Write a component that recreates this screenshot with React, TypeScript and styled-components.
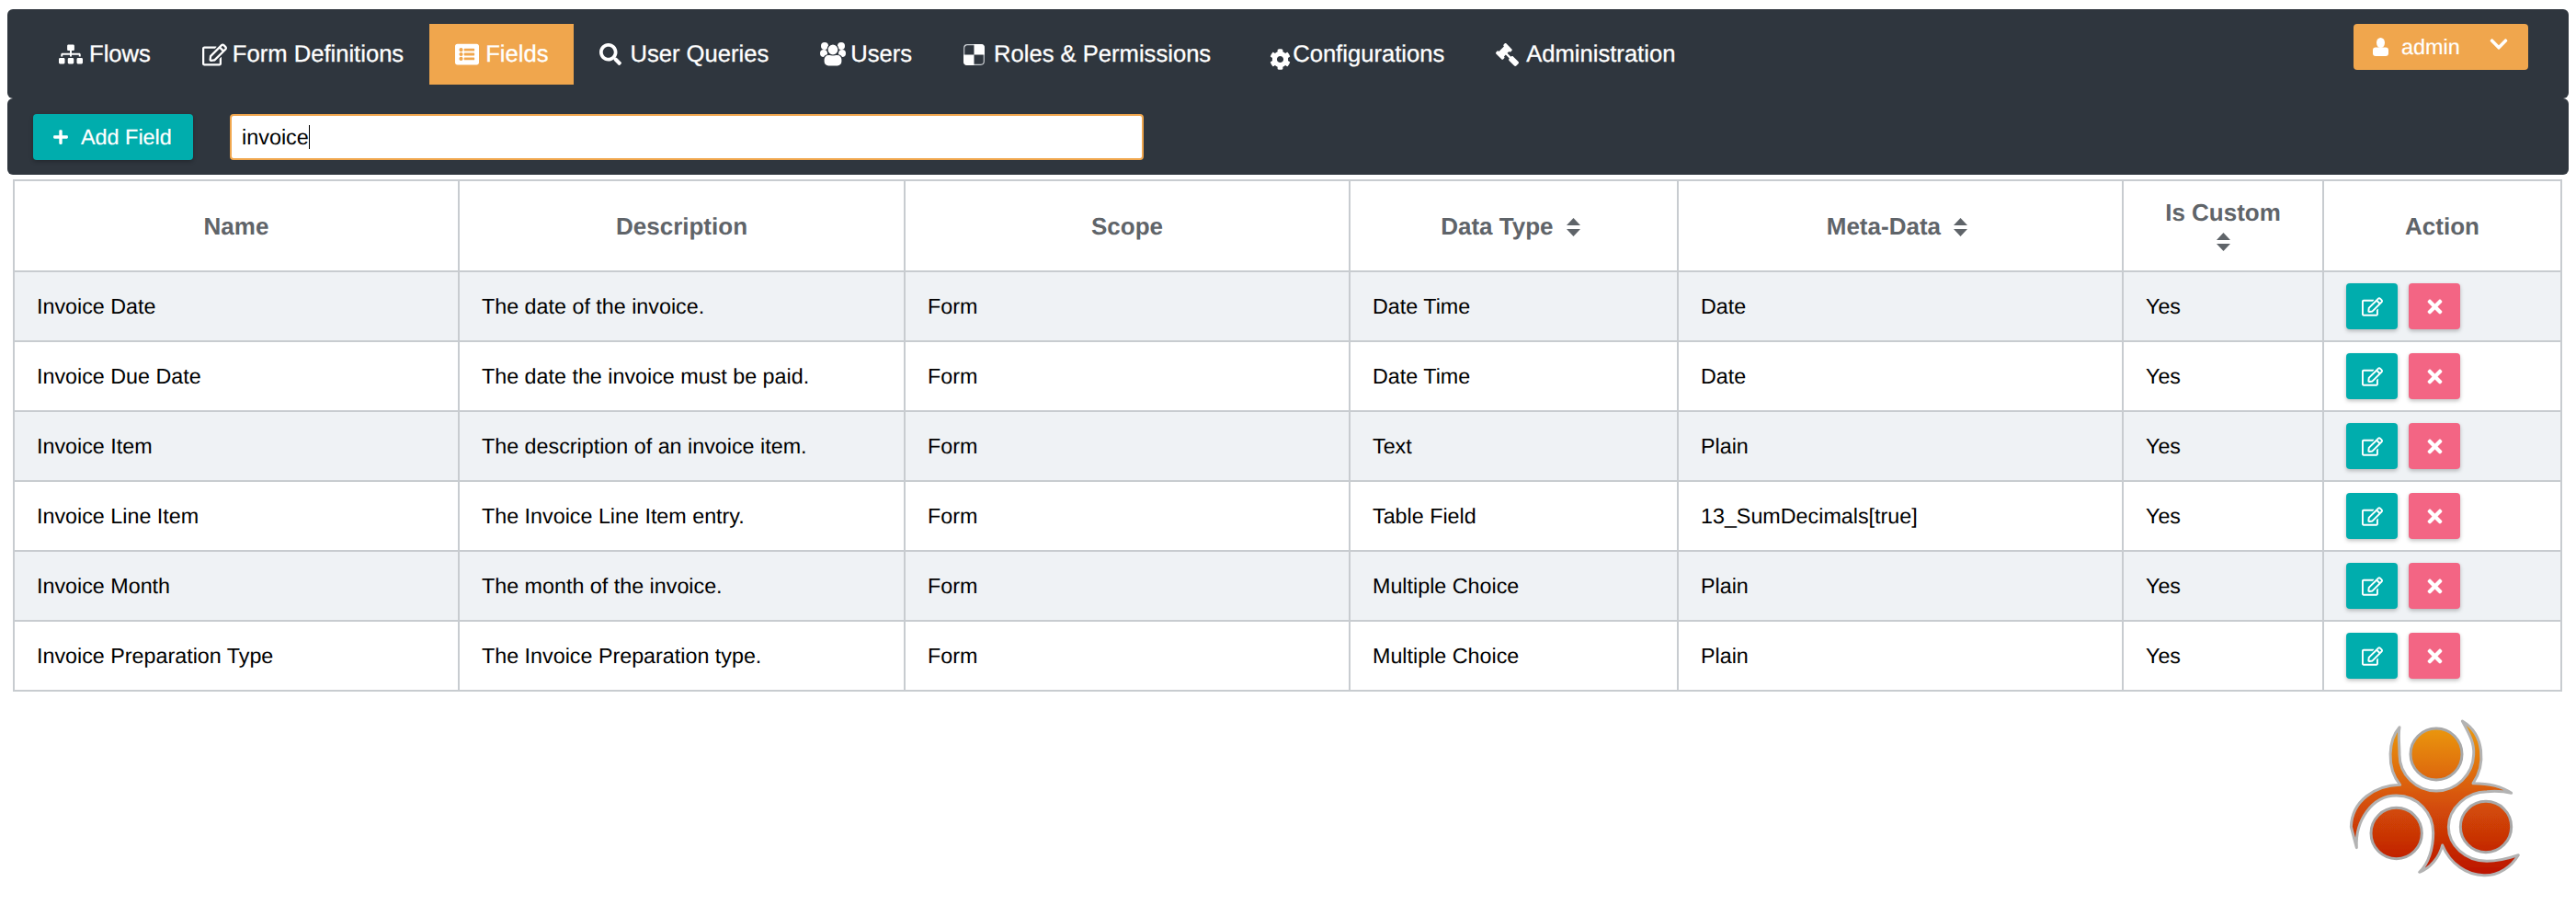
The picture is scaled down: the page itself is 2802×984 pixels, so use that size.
import React from "react";
import styled, { createGlobalStyle } from "styled-components";
import {
  FaSitemap,
  FaRegEdit,
  FaListAlt,
  FaSearch,
  FaCog,
  FaGavel,
  FaChevronDown,
  FaPlus,
  FaTimes,
} from "react-icons/fa";

const GlobalStyle = createGlobalStyle`
  html, body {
    margin: 0;
    padding: 0;
    background: #ffffff;
    font-family: "Liberation Sans", Arial, sans-serif;
    text-rendering: geometricPrecision;
  }
`;

const Page = styled.div`
  width: 2802px;
  height: 984px;
  padding-top: 10px;
  box-sizing: border-box;
  overflow: hidden;
`;

const TopBar = styled.div`
  margin: 0 8px;
  height: 97px;
  padding: 16px 44px 0 28px;
  box-sizing: border-box;
  background: #2f363e;
  border-radius: 6px;
  display: flex;
  justify-content: space-between;
  align-items: flex-start;
`;

const NavTabs = styled.nav`
  display: flex;
  height: 66px;
`;

const NavItem = styled.a<{ $active?: boolean }>`
  display: flex;
  align-items: center;
  padding: 0 28px;
  font-size: 25.6px;
  color: #ffffff;
  white-space: nowrap;
  -webkit-text-stroke: 0.3px #ffffff;
  background: ${(p) => (p.$active ? "#f0a64d" : "transparent")};
`;

const NavIcon = styled.span<{ $gear?: boolean }>`
  display: inline-flex;
  align-items: center;
  width: ${(p) => (p.$gear ? "25px" : "33px")};
  margin-left: ${(p) => (p.$gear ? "8px" : "0")};
  transform: translateY(${(p) => (p.$gear ? "5px" : "0")});
`;

const Gavel = styled(FaGavel)`
  transform: scaleX(-1);
`;

const UserButton = styled.button`
  width: 190px;
  height: 50px;
  padding: 0 21px;
  box-sizing: border-box;
  display: flex;
  align-items: center;
  border: none;
  border-radius: 4px;
  background: #f0a64d;
  color: #ffffff;
  font-family: inherit;
  font-size: 23.4px;
  -webkit-text-stroke: 0.2px #ffffff;
  text-rendering: geometricPrecision;
`;

const UserName = styled.span`
  margin-left: 14px;
`;

const Chevron = styled.span`
  margin-left: auto;
  display: inline-flex;
  transform: translateY(-3px);
  stroke: #ffffff;
  stroke-width: 30px;
`;

const ToolBar = styled.div`
  margin: 0 8px;
  height: 83px;
  padding: 17px 28px 0;
  box-sizing: border-box;
  background: #2f363e;
  border-radius: 6px;
  display: flex;
  align-items: flex-start;
  gap: 40px;
`;

const AddButton = styled.button`
  width: 174px;
  height: 50px;
  padding: 0 0 0 21px;
  box-sizing: border-box;
  display: flex;
  align-items: center;
  gap: 13px;
  border: none;
  border-radius: 4px;
  background: #00adad;
  box-shadow: 0 2px 4px rgba(0, 0, 0, 0.25);
  color: #ffffff;
  font-family: inherit;
  font-size: 23.4px;
  -webkit-text-stroke: 0.2px #ffffff;
  text-rendering: geometricPrecision;
`;

const SearchField = styled.div`
  width: 994px;
  height: 50px;
  padding-left: 11px;
  box-sizing: border-box;
  display: flex;
  align-items: center;
  background: #ffffff;
  border: 2px solid #f0a64d;
  border-radius: 4px;
  color: #000000;
  font-size: 23.4px;
`;

const Caret = styled.span`
  width: 1.5px;
  height: 26px;
  background: #000000;
`;

const Table = styled.table`
  width: 2771px;
  margin: 5px 0 0 14px;
  border-collapse: collapse;
  table-layout: fixed;
  font-size: 23.3px;
  color: #000000;
`;

const HeadCell = styled.th`
  height: 99px;
  padding: 2px 10px 0;
  box-sizing: border-box;
  border: 2px solid #c8ccd0;
  font-size: 26px;
  line-height: 29px;
  font-weight: bold;
  color: #5f6469;
  text-align: center;
`;

const Row = styled.tr`
  &:nth-child(odd) {
    background: #eff2f5;
  }
`;

const Cell = styled.td`
  height: 76px;
  padding: 1px 0 0 24px;
  box-sizing: border-box;
  border: 2px solid #c8ccd0;
`;

const ActionCell = styled(Cell)`
  font-size: 0;
  padding-top: 0;
`;

const Actions = styled.div`
  display: flex;
  gap: 12px;
`;

const ActionButton = styled.button<{ $kind: "edit" | "remove" }>`
  width: 56px;
  height: 50px;
  padding: 0;
  display: flex;
  align-items: center;
  justify-content: center;
  border: none;
  border-radius: 4px;
  color: #ffffff;
  background: ${(p) => (p.$kind === "edit" ? "#00adad" : "#f36584")};
  box-shadow: 0 2px 4px rgba(0, 0, 0, 0.25);
`;

const SortMark = styled.svg<{ $below?: boolean }>`
  width: 15px;
  height: 20px;
  vertical-align: -2px;
  display: ${(p) => (p.$below ? "block" : "inline-block")};
  margin: ${(p) => (p.$below ? "7px auto 4px" : "0 7px")};
`;

const LogoRow = styled.div`
  display: flex;
  justify-content: flex-end;
  margin-top: 7px;
`;

const SortIcon = ({ below }: { below?: boolean }) => (
  <SortMark $below={below} viewBox="0 0 15 20">
    <path d="M7.5 0 L15 8 H0 Z M0 12 H15 L7.5 20 Z" fill="#5f6469" />
  </SortMark>
);

const UsersIcon = () => (
  <svg width="28" height="26" viewBox="0 0 28 26">
    <circle cx="5" cy="4" r="4" fill="#fff" />
    <circle cx="23" cy="4" r="4" fill="#fff" />
    <ellipse cx="4" cy="12" rx="4" ry="4" fill="#fff" />
    <ellipse cx="24" cy="12" rx="4" ry="4" fill="#fff" />
    <rect x="4" y="13.5" width="20" height="12.5" rx="5" fill="#fff" stroke="#2f363e" strokeWidth="1.2" />
    <circle cx="14" cy="8" r="6" fill="#fff" stroke="#2f363e" strokeWidth="1.2" />
  </svg>
);

const RolesIcon = () => (
  <svg width="23" height="23" viewBox="0 0 23 23">
    <rect x="0.7" y="0.7" width="21.6" height="21.6" rx="3.5" fill="none" stroke="#c9cdd1" strokeWidth="1.2" />
    <path d="M11.5 0 H19 Q23 0 23 4 V11.5 H11.5 Z M0 11.5 H11.5 V23 H4 Q0 23 0 19 Z" fill="#fff" />
  </svg>
);

const UserIcon = () => (
  <svg width="17" height="20" viewBox="0 0 17 20">
    <ellipse cx="8.5" cy="5.5" rx="4.5" ry="5.5" fill="#fff" />
    <rect x="0" y="10.5" width="17" height="9.5" rx="3" fill="#fff" />
  </svg>
);

const Logo = () => (
  <svg width="302" height="224" viewBox="0 0 906 672">
    <defs>
      <linearGradient id="logoBody" gradientUnits="userSpaceOnUse" x1="0" y1="80" x2="0" y2="580">
        <stop offset="0" stopColor="#ec9c10" />
        <stop offset="0.45" stopColor="#d95a08" />
        <stop offset="1" stopColor="#bb1204" />
      </linearGradient>
      <filter id="logoSoft">
        <feGaussianBlur stdDeviation="1.6" />
      </filter>
    </defs>
    <g filter="url(#logoSoft)">
      <path
        d="M330 95 C295 135 285 225 332 283 C250 285 175 335 172 420 L190 488
           C185 400 240 318 320 318 C390 318 440 375 440 440 C440 490 425 540 395 568
           C430 555 460 520 470 480 C495 540 550 580 610 578 C655 578 695 550 718 512
           C680 525 650 532 615 532 C545 532 490 480 490 420 C490 360 550 305 615 305
           C645 303 675 305 695 310 C660 285 610 278 570 278 C610 220 610 120 535 75
           C560 120 575 150 572 185 C570 250 515 303 450 303 C385 303 330 250 330 185
           C330 150 325 125 330 95 Z"
        fill="url(#logoBody)"
        stroke="#b3b3b3"
        strokeWidth="9"
        strokeLinejoin="round"
      />
      <circle cx="450" cy="183" r="84" fill="url(#logoBody)" stroke="#a8a8a8" strokeWidth="9" />
      <circle cx="320" cy="441" r="83" fill="url(#logoBody)" stroke="#a8a8a8" strokeWidth="9" />
      <circle cx="612" cy="420" r="83" fill="url(#logoBody)" stroke="#a8a8a8" strokeWidth="9" />
    </g>
  </svg>
);

const navItems = [
  { label: "Flows", icon: <FaSitemap size={26} /> },
  { label: "Form Definitions", icon: <FaRegEdit size={27} /> },
  { label: "Fields", icon: <FaListAlt size={26} />, active: true },
  { label: "User Queries", icon: <FaSearch size={24} /> },
  { label: "Users", icon: <UsersIcon /> },
  { label: "Roles & Permissions", icon: <RolesIcon /> },
  { label: "Configurations", icon: <FaCog size={23} />, gear: true },
  { label: "Administration", icon: <Gavel size={25} /> },
];

const rows = [
  ["Invoice Date", "The date of the invoice.", "Form", "Date Time", "Date", "Yes"],
  ["Invoice Due Date", "The date the invoice must be paid.", "Form", "Date Time", "Date", "Yes"],
  ["Invoice Item", "The description of an invoice item.", "Form", "Text", "Plain", "Yes"],
  ["Invoice Line Item", "The Invoice Line Item entry.", "Form", "Table Field", "13_SumDecimals[true]", "Yes"],
  ["Invoice Month", "The month of the invoice.", "Form", "Multiple Choice", "Plain", "Yes"],
  ["Invoice Preparation Type", "The Invoice Preparation type.", "Form", "Multiple Choice", "Plain", "Yes"],
];

const colWidths = [484, 485, 484, 357, 484, 218, 259];

function App() {
  return (
    <Page>
      <GlobalStyle />
      <TopBar>
        <NavTabs>
          {navItems.map((item) => (
            <NavItem key={item.label} $active={item.active}>
              <NavIcon $gear={item.gear}>{item.icon}</NavIcon>
              {item.label}
            </NavItem>
          ))}
        </NavTabs>
        <UserButton>
          <UserIcon />
          <UserName>admin</UserName>
          <Chevron>
            <FaChevronDown size={22} />
          </Chevron>
        </UserButton>
      </TopBar>

      <ToolBar>
        <AddButton>
          <FaPlus size={18} />
          Add Field
        </AddButton>
        <SearchField role="textbox">
          invoice
          <Caret />
        </SearchField>
      </ToolBar>

      <Table>
        <colgroup>
          {colWidths.map((w, i) => (
            <col key={i} width={w} />
          ))}
        </colgroup>
        <thead>
          <tr>
            <HeadCell>Name</HeadCell>
            <HeadCell>Description</HeadCell>
            <HeadCell>Scope</HeadCell>
            <HeadCell>
              Data Type <SortIcon />
            </HeadCell>
            <HeadCell>
              Meta-Data <SortIcon />
            </HeadCell>
            <HeadCell>
              Is Custom
              <SortIcon below />
            </HeadCell>
            <HeadCell>Action</HeadCell>
          </tr>
        </thead>
        <tbody>
          {rows.map((row) => (
            <Row key={row[0]}>
              {row.map((value, i) => (
                <Cell key={i}>{value}</Cell>
              ))}
              <ActionCell>
                <Actions>
                  <ActionButton $kind="edit">
                    <FaRegEdit size={23} />
                  </ActionButton>
                  <ActionButton $kind="remove">
                    <FaTimes size={23} />
                  </ActionButton>
                </Actions>
              </ActionCell>
            </Row>
          ))}
        </tbody>
      </Table>

      <LogoRow>
        <Logo />
      </LogoRow>
    </Page>
  );
}

export default App;
